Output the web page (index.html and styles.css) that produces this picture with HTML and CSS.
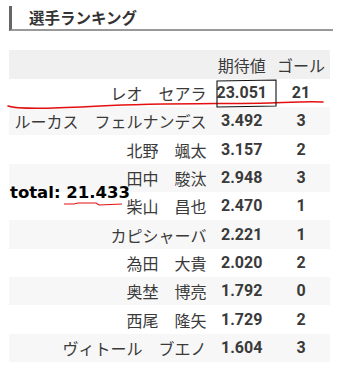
FILE: index.html
```html
<!DOCTYPE html>
<html lang="ja">
<head>
<meta charset="utf-8">
<link rel="stylesheet" href="styles.css">
</head>
<body>
<div class="page">
  <h2 class="title">選手ランキング</h2>
  <table class="ranking">
    <thead>
      <tr><th class="name"></th><th class="val">期待値</th><th class="goal">ゴール</th></tr>
    </thead>
    <tbody>
      <tr><td class="name">レオ　セアラ</td><td class="val">23.051</td><td class="goal">21</td></tr>
      <tr><td class="name">ルーカス　フェルナンデス</td><td class="val">3.492</td><td class="goal">3</td></tr>
      <tr><td class="name">北野　颯太</td><td class="val">3.157</td><td class="goal">2</td></tr>
      <tr><td class="name">田中　駿汰</td><td class="val">2.948</td><td class="goal">3</td></tr>
      <tr><td class="name">柴山　昌也</td><td class="val">2.470</td><td class="goal">1</td></tr>
      <tr><td class="name">カピシャーバ</td><td class="val">2.221</td><td class="goal">1</td></tr>
      <tr><td class="name">為田　大貴</td><td class="val">2.020</td><td class="goal">2</td></tr>
      <tr><td class="name">奥埜　博亮</td><td class="val">1.792</td><td class="goal">0</td></tr>
      <tr><td class="name">西尾　隆矢</td><td class="val">1.729</td><td class="goal">2</td></tr>
      <tr><td class="name">ヴィトール　ブエノ</td><td class="val">1.604</td><td class="goal">3</td></tr>
    </tbody>
  </table>
  <div class="total">total: 21.433</div>
  <svg class="marks" width="340" height="373" viewBox="0 0 340 373">
    <path d="M8 106 C 20 110, 60 108, 100 106 C 160 103, 220 104, 270 103 C 295 102, 310 101, 323 102" fill="none" stroke="#e41010" stroke-width="1.6" stroke-linecap="round"/>
    <path d="M217 81 L276 80 L276 106 L217 107 Z" fill="none" stroke="#111" stroke-width="1.1"/>
    <path d="M64 204 L74 204 L78 203 L96 203 L99 205 L122 204" fill="none" stroke="#e41010" stroke-width="1.2"/>
  </svg>
</div>
</body>
</html>
```
FILE: styles.css
```css
html, body {
  margin: 0;
  padding: 0;
  background: #fff;
}
.page {
  position: relative;
  width: 340px;
  height: 373px;
  overflow: hidden;
}
.title {
  margin: 6px 7px 0 9px;
  padding: 0 0 0 17px;
  height: 23px;
  line-height: 23px;
  border-left: 3px solid #666;
  border-bottom: 2px solid #999;
  font-family: "Noto Sans CJK JP", sans-serif;
  font-weight: bold;
  font-size: 15.5px;
  color: #333;
}
.ranking {
  margin: 19px 0 0 9px;
  width: 321px;
  border-collapse: collapse;
  font-family: Roboto, "Noto Sans CJK JP", sans-serif;
  font-size: 16px;
  color: #3a3a3a;
}
.ranking th, .ranking td {
  height: 28px;
  padding: 0 5px;
  line-height: 20px;
  font-weight: normal;
}
.ranking thead th {
  height: 29px;
}
.ranking thead tr {
  background: #f0f0f0;
}
.ranking tbody tr:nth-child(even) {
  background: #f7f7f7;
}
.ranking tbody tr:nth-child(3n) td {
  height: 29px;
}
.ranking .name {
  text-align: right;
  font-family: "Noto Sans CJK JP", sans-serif;
}
.ranking .val {
  width: 48px;
  text-align: center;
}
.ranking .goal {
  width: 48px;
  text-align: center;
}
.ranking td.val, .ranking td.goal {
  font-weight: bold;
}
.ranking th.val, .ranking th.goal {
  font-family: "Noto Sans CJK JP", sans-serif;
}
.total {
  position: absolute;
  left: 10px;
  top: 183px;
  font-family: "DejaVu Sans", sans-serif;
  font-weight: bold;
  font-size: 16.5px;
  color: #000;
}
.marks {
  position: absolute;
  left: 0;
  top: 0;
  pointer-events: none;
}
```
